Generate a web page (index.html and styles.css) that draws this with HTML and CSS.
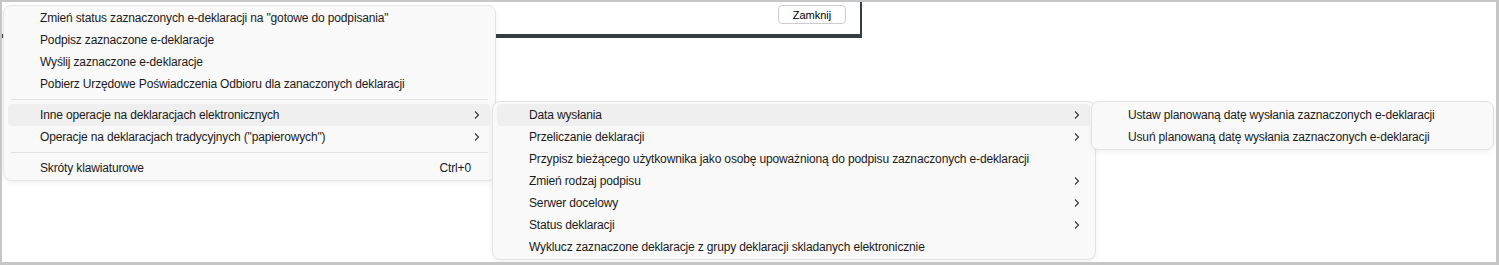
FILE: index.html
```html
<!DOCTYPE html>
<html lang="pl">
<head>
    <meta charset="UTF-8">
    <meta name="viewport" content="width=device-width, initial-scale=1.0">
    <title>Menu kontekstowe e-deklaracji</title>
    <link rel="stylesheet" href="styles.css">
</head>
<body>
    <div class="screen">
        <div class="dialog">
            <button class="dialog-button">Zamknij</button>
        </div>

        <div class="menu menu-main">
            <div class="menu-item"><span class="label">Zmień status zaznaczonych e-deklaracji na "gotowe do podpisania"</span></div>
            <div class="menu-item"><span class="label">Podpisz zaznaczone e-deklaracje</span></div>
            <div class="menu-item"><span class="label">Wyślij zaznaczone e-deklaracje</span></div>
            <div class="menu-item"><span class="label">Pobierz Urzędowe Poświadczenia Odbioru dla zanaczonych deklaracji</span></div>
            <div class="separator"></div>
            <div class="menu-item active">
                <span class="label">Inne operacje na deklaracjach elektronicznych</span>
                <svg class="arrow" width="8" height="10" viewBox="0 0 8 10"><polyline points="2,1.5 5.5,5 2,8.5"/></svg>
            </div>
            <div class="menu-item">
                <span class="label">Operacje na deklaracjach tradycyjnych ("papierowych")</span>
                <svg class="arrow" width="8" height="10" viewBox="0 0 8 10"><polyline points="2,1.5 5.5,5 2,8.5"/></svg>
            </div>
            <div class="separator"></div>
            <div class="menu-item">
                <span class="label">Skróty klawiaturowe</span>
                <span class="shortcut">Ctrl+0</span>
            </div>
        </div>

        <div class="menu menu-sub">
            <div class="menu-item active">
                <span class="label">Data wysłania</span>
                <svg class="arrow" width="8" height="10" viewBox="0 0 8 10"><polyline points="2,1.5 5.5,5 2,8.5"/></svg>
            </div>
            <div class="menu-item">
                <span class="label">Przeliczanie deklaracji</span>
                <svg class="arrow" width="8" height="10" viewBox="0 0 8 10"><polyline points="2,1.5 5.5,5 2,8.5"/></svg>
            </div>
            <div class="menu-item"><span class="label">Przypisz bieżącego użytkownika jako osobę upoważnioną do podpisu zaznaczonych e-deklaracji</span></div>
            <div class="menu-item">
                <span class="label">Zmień rodzaj podpisu</span>
                <svg class="arrow" width="8" height="10" viewBox="0 0 8 10"><polyline points="2,1.5 5.5,5 2,8.5"/></svg>
            </div>
            <div class="menu-item">
                <span class="label">Serwer docelowy</span>
                <svg class="arrow" width="8" height="10" viewBox="0 0 8 10"><polyline points="2,1.5 5.5,5 2,8.5"/></svg>
            </div>
            <div class="menu-item">
                <span class="label">Status deklaracji</span>
                <svg class="arrow" width="8" height="10" viewBox="0 0 8 10"><polyline points="2,1.5 5.5,5 2,8.5"/></svg>
            </div>
            <div class="menu-item"><span class="label">Wyklucz zaznaczone deklaracje z grupy deklaracji skladanych elektronicznie</span></div>
        </div>

        <div class="menu menu-date">
            <div class="menu-item"><span class="label">Ustaw planowaną datę wysłania zaznaczonych e-deklaracji</span></div>
            <div class="menu-item"><span class="label">Usuń planowaną datę wysłania zaznaczonych e-deklaracji</span></div>
        </div>
    </div>
</body>
</html>
```

FILE: styles.css
```css
* {
    margin: 0;
    padding: 0;
    box-sizing: border-box;
}

body {
    background: #ffffff;
    font-family: "Segoe UI", "Liberation Sans", Arial, sans-serif;
}

.screen {
    position: relative;
    width: 1499px;
    height: 265px;
    background: #ffffff;
    border: 2px solid #c6c6c6;
    border-right-width: 3px;
    border-bottom-width: 3px;
    overflow: hidden;
}

/* okno w tle */
.dialog {
    width: 860px;
    height: 36px;
    background: #ffffff;
    border-right: 2px solid #353d47;
    border-bottom: 4px solid #353d47;
    display: flex;
    justify-content: flex-end;
    align-items: flex-start;
    padding-top: 3px;
    padding-right: 14px;
}

.dialog-button {
    width: 68px;
    height: 19px;
    background: #ffffff;
    border: 1px solid #cccccc;
    border-radius: 4px;
    font-family: "Liberation Sans", Arial, sans-serif;
    font-size: 11px;
    color: #000000;
}

/* menu kontekstowe */
.menu {
    position: absolute;
    background: #f9f9f9;
    border: 1px solid #e3e3e3;
    border-radius: 8px;
    box-shadow: 0 2px 5px rgba(0, 0, 0, 0.06);
    padding: 2px 5px 1px 4px;
    font-size: 12px;
    letter-spacing: -0.15px;
    color: #1a1a1a;
}

.menu-main {
    left: 1px;
    top: 3px;
    width: 493px;
    padding-top: 1px;
}

.menu-sub {
    left: 490px;
    top: 99px;
    width: 604px;
}

.menu-date {
    left: 1089px;
    top: 99px;
    width: 403px;
}

.menu-item {
    display: flex;
    align-items: center;
    height: 22px;
    padding: 0 9px 0 32px;
    border-radius: 4px;
    white-space: nowrap;
}

.menu-item.active {
    background: #efefef;
}

.label {
    flex: 1;
}

.shortcut {
    padding-right: 10px;
}

.arrow {
    fill: none;
    stroke: #333333;
    stroke-width: 1.1;
}

.separator {
    height: 1px;
    margin: 4px 2px 4px 3px;
    background: #e0e0e0;
}
```
